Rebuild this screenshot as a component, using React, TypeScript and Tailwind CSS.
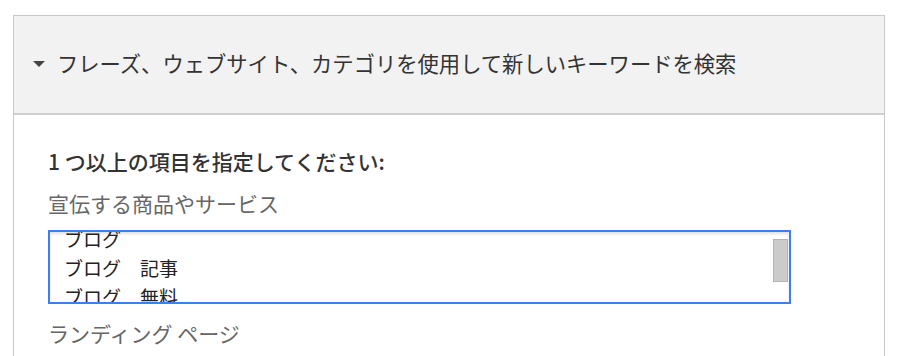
import React from 'react';

const lines = ['ブログ', 'ブログ　記事', 'ブログ　無料'];

const KeywordSection: React.FC = () => {
  return (
    <div className="ml-[13px] mt-[15px] w-[872px] border border-[#c8c8c8] bg-white">
      <div className="flex h-[99px] items-center border-b-2 border-[#cfcfcf] bg-[#f2f2f2] pb-[4px] pl-[19px]">
        <svg width="12" height="6" viewBox="0 0 12 6" className="mr-[12px] mt-[2px]">
          <polygon points="0,0 12,0 6,6" fill="#444" />
        </svg>
        <span className="text-[21.3px] leading-[30px] text-[#333]">
          フレーズ、ウェブサイト、カテゴリを使用して新しいキーワードを検索
        </span>
      </div>
      <div className="pl-[34px] pt-[31px] pb-[10px]">
        <div className="text-[21px] leading-[30px] font-medium text-[#333]">1 つ以上の項目を指定してください:</div>
        <div className="mt-[12px] text-[21px] leading-[30px] text-[#666]">宣伝する商品やサービス</div>
        <div className="relative mt-[12px] h-[74px] w-[743px] overflow-hidden border-2 border-[#3b7ef6] bg-white shadow-[inset_0_2px_3px_rgba(0,0,0,0.12)]">
          <div className="-mt-[8px] pl-[14px] text-[19px] leading-[29px] text-[#222]">
            {lines.map(l => (
              <div key={l}>{l}</div>
            ))}
          </div>
          <div className="absolute right-[1px] top-[7px] h-[43px] w-[15px] border border-[#b4b4b4] bg-[#cbcbcb]" />
        </div>
        <div className="mt-[14px] text-[21px] leading-[30px] text-[#666]">ランディング ページ</div>
      </div>
    </div>
  );
};

export default function App() {
  return (
    <div className="h-[356px] w-[900px] overflow-hidden bg-white font-['Noto_Sans_CJK_JP','Noto_Sans',sans-serif]">
      <KeywordSection />
    </div>
  );
}
